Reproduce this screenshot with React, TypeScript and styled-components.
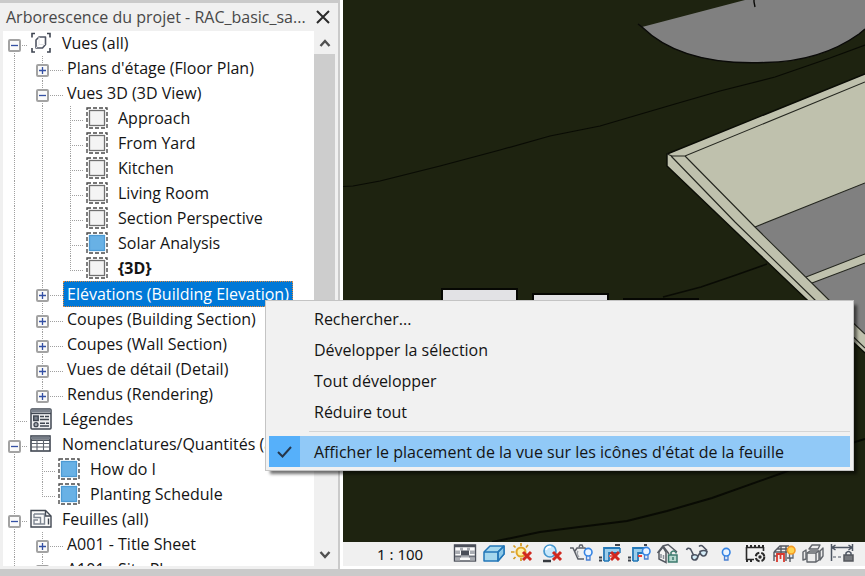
import React from "react";
import styled, { createGlobalStyle, css } from "styled-components";

const GlobalStyle = createGlobalStyle`
  * { box-sizing: border-box; }
  html, body, #root { height: 100%; }
  body {
    margin: 0;
    overflow: hidden;
    background: #cacaca;
    color: #141414;
    font-family: "Open Sans", "Noto Sans", sans-serif;
    font-size: 16px;
  }
  button { font: inherit; color: inherit; border: 0; padding: 0; background: none; }
  ul { list-style: none; margin: 0; padding: 0; }
`;

const Page = styled.div`
  display: flex;
  height: 100vh;
  padding-bottom: 7px;
  position: relative;
`;

const Browser = styled.aside`
  flex: 0 0 338px;
  display: flex;
  flex-direction: column;
  margin-top: 3px;
  padding: 0 3px 3px;
  background: #f0f0f0;
  min-height: 0;
`;

const TitleBar = styled.header`
  display: flex;
  align-items: center;
  justify-content: space-between;
  height: 28px;
  padding: 0 3px;
  color: #484848;
`;

const Title = styled.h1`
  margin: 0;
  font-size: 16px;
  font-weight: 400;
  line-height: 28px;
  white-space: nowrap;
`;

const CloseButton = styled.button`
  display: flex;
  padding: 2px;
`;

const BrowserBody = styled.div`
  flex: 1;
  display: flex;
  min-height: 0;
`;

const Tree = styled.ul`
  flex: 1;
  min-width: 0;
  overflow: hidden;
  background: #fff;
  padding-left: 11px !important;
`;

const TreeRow = styled.li<{ $selected?: boolean }>`
  display: flex;
  height: ${(p) => (p.$selected ? 26 : 25)}px;
  align-items: stretch;
`;

const dotsDown = "repeating-linear-gradient(to bottom, #a0a0a0 0 1px, transparent 1px 2px)";
const dotsAcross = "repeating-linear-gradient(to right, #a0a0a0 0 1px, transparent 1px 2px)";

type GuideKind = "line" | "tee" | "end" | "first";

const Guide = styled.span<{ $kind: GuideKind; $width: number }>`
  position: relative;
  flex: 0 0 ${(p) => p.$width}px;
  background-image: ${(p) => (p.$kind === "line" ? dotsDown : `${dotsDown}, ${dotsAcross}`)};
  background-repeat: no-repeat;
  background-size: 1px ${(p) => (p.$kind === "end" || p.$kind === "first" ? "14px" : "100%")},
    calc(100% - 3px) 1px;
  background-position: 0 ${(p) => (p.$kind === "first" ? "14px" : "0")}, 0 14px;
`;

const Expander = styled.button`
  position: absolute;
  left: -6px;
  top: 8px;
  width: 13px;
  height: 13px;
  border: 2px solid #a3a3a3;
  border-radius: 2px;
  background: #fafafa;
  display: flex;
  svg { display: block; }
`;

const NodeIcon = styled.span`
  flex: 0 0 32px;
  display: flex;
  align-items: flex-start;
  padding-top: 1px;
`;

const Label = styled.span<{ $bold?: boolean; $selected?: boolean }>`
  line-height: ${(p) => (p.$selected ? 26 : 25)}px;
  white-space: nowrap;
  font-weight: ${(p) => (p.$bold ? 700 : 400)};
  ${(p) =>
    p.$selected &&
    css`
      background: #0078d7;
      color: #fff;
      outline: 1px dotted #e58a3c;
      outline-offset: -1px;
      margin-left: -4px;
      padding: 0 4px;
    `}
`;

const ScrollBar = styled.div`
  flex: 0 0 21px;
  display: flex;
  flex-direction: column;
  background: #f0f0f0;
`;

const ScrollArrow = styled.button`
  flex: 0 0 23px;
  display: flex;
  align-items: center;
  justify-content: center;
`;

const ScrollTrack = styled.div`
  flex: 1;
`;

const ScrollThumb = styled.div`
  height: 70%;
  background: #cdcdcd;
`;

const ViewArea = styled.main`
  flex: 1;
  min-width: 0;
  display: flex;
  flex-direction: column;
  margin-left: 2px;
  border-left: 3px solid #fff;
  border-bottom: 3px solid #fff;
`;

const Scene = styled.svg`
  flex: 1;
  min-height: 0;
  width: 100%;
  display: block;
  background: #1e2310;
`;

const StatusBar = styled.footer`
  flex: 0 0 24px;
  display: flex;
  align-items: center;
  background: #f0f0f0;
`;

const Scale = styled.button`
  flex: 0 0 107px;
  padding-left: 34px;
  text-align: left;
  font-family: "Noto Sans", sans-serif;
  font-size: 15px;
  line-height: 22px;
  white-space: nowrap;
`;

const ToolButton = styled.button`
  flex: 0 0 29px;
  display: flex;
  justify-content: center;
  svg { display: block; }
`;

const Menu = styled.div`
  position: absolute;
  left: 265px;
  top: 300px;
  right: 11px;
  padding: 2px 3px 3px;
  border: 1px solid #c4c4c4;
  background: #f1f1f1;
  box-shadow: 4px 4px 3px -1px rgba(0, 0, 0, 0.55);
`;

const MenuItem = styled.button<{ $active?: boolean }>`
  display: flex;
  align-items: center;
  width: 100%;
  height: 31px;
  text-align: left;
  white-space: nowrap;
  background: ${(p) => (p.$active ? "#91c9f7" : "transparent")};
`;

const CheckCell = styled.span<{ $active?: boolean }>`
  flex: 0 0 31px;
  align-self: stretch;
  display: flex;
  align-items: center;
  justify-content: center;
  margin-right: 14px;
  background: ${(p) => (p.$active ? "#56b0fa" : "transparent")};
`;

const MenuSeparator = styled.hr`
  margin: 4px 0 4px 40px;
  border: 0;
  border-top: 1px solid #d5d5d5;
`;

/* ---------- tree icons ---------- */

const ViewsIcon = () => (
  <svg width="22" height="22" viewBox="0 0 22 22" fill="none" stroke="#3f4552" strokeWidth="1.6">
    <path d="M5 1.5H2v4M17 1.5h3v4M2 16v4h3M20 16v4h-3" />
    <path d="M6 8l3-3h6.500v7.500L12.500 16H6z" stroke="#505664" strokeLinejoin="round" />
    <path d="M9 5v7.500h6M9 12.500L6 16" stroke="#e4e5e8" strokeWidth="1" />
  </svg>
);

const SheetIcon = ({ filled }: { filled?: boolean }) => (
  <svg width="22" height="22" viewBox="0 0 22 22">
    <rect x="1" y="1" width="20" height="20" fill="#fff" stroke="#4a4a4a" strokeWidth="1.400" strokeDasharray="4 2" />
    <rect
      x="3.500" y="3.500" width="15" height="15"
      fill={filled ? "#68b1e5" : "#f4f4f4"}
      stroke={filled ? "#4c9ad3" : "#707070"} strokeWidth="1.300"
    />
  </svg>
);

const LegendIcon = () => (
  <svg width="22" height="22" viewBox="0 0 22 22" fill="none" stroke="#404752">
    <rect x="1" y="1" width="20" height="20" rx="1" fill="#eeeff1" strokeWidth="1.500" />
    <path d="M1 3h20" stroke="#7b828d" strokeWidth="3" />
    <path d="M1 5.500h20" strokeWidth="1.300" />
    <rect x="3.700" y="8" width="4.500" height="4.500" fill="#7b828d" strokeWidth="1.400" />
    <circle cx="6" cy="16.700" r="2" fill="#a5aab1" strokeWidth="1.300" />
    <path d="M10 8.500h4M15 8.500h4M10 11.500h9M10 15.200h5M16 15.200h3M10 18h9" strokeWidth="1.400" />
  </svg>
);

const ScheduleIcon = () => (
  <svg width="22" height="22" viewBox="0 0 22 22" fill="none" stroke="#404752">
    <rect x="1" y="3" width="19" height="15" fill="#fff" strokeWidth="1.600" />
    <path d="M1 5h19" stroke="#777e88" strokeWidth="2.500" />
    <path d="M1 7.200h19" strokeWidth="1.500" />
    <path d="M1 10.500h19M1 14h19M7 7v11M13.500 7v11" stroke="#5d636d" strokeWidth="1.100" />
  </svg>
);

const SheetsIcon = () => (
  <svg width="22" height="22" viewBox="0 0 22 22" fill="none" stroke="#404752" strokeWidth="1.400">
    <path d="M1 2.500h14.500L21 8v11H1z" fill="#fafafa" />
    <path d="M15.500 2.500v5.500H21M18.500 10.500v6" />
    <path d="M4 6h10.500v10h-4M4 6v3.500h6.500V16H4v-4h4" stroke="#7f8792" strokeWidth="1.400" />
  </svg>
);

type IconName = "views" | "empty" | "filled" | "legend" | "schedule" | "sheets";

const nodeIcons: Record<IconName, React.ReactElement> = {
  views: <ViewsIcon />,
  empty: <SheetIcon />,
  filled: <SheetIcon filled />,
  legend: <LegendIcon />,
  schedule: <ScheduleIcon />,
  sheets: <SheetsIcon />,
};

interface TreeNode {
  label: string;
  guides: GuideKind[];
  toggle?: "plus" | "minus";
  icon?: IconName;
  bold?: boolean;
  selected?: boolean;
}

const view = (label: string, extra: Partial<TreeNode> = {}): TreeNode => ({
  label,
  guides: ["line", "line", "tee"],
  icon: "empty",
  ...extra,
});

const category = (label: string, extra: Partial<TreeNode> = {}): TreeNode => ({
  label,
  guides: ["line", "tee"],
  toggle: "plus",
  ...extra,
});

const nodes: TreeNode[] = [
  { label: "Vues (all)", guides: ["first"], toggle: "minus", icon: "views" },
  category("Plans d'étage (Floor Plan)"),
  category("Vues 3D (3D View)", { toggle: "minus" }),
  view("Approach"),
  view("From Yard"),
  view("Kitchen"),
  view("Living Room"),
  view("Section Perspective"),
  view("Solar Analysis", { icon: "filled" }),
  view("{3D}", { bold: true, guides: ["line", "line", "end"] }),
  category("Elévations (Building Elevation)", { selected: true }),
  category("Coupes (Building Section)"),
  category("Coupes (Wall Section)"),
  category("Vues de détail (Detail)"),
  category("Rendus (Rendering)", { guides: ["line", "end"] }),
  { label: "Légendes", guides: ["tee"], icon: "legend" },
  { label: "Nomenclatures/Quantités (all)", guides: ["tee"], toggle: "minus", icon: "schedule" },
  { label: "How do I", guides: ["line", "tee"], icon: "filled" },
  { label: "Planting Schedule", guides: ["line", "end"], icon: "filled" },
  { label: "Feuilles (all)", guides: ["tee"], toggle: "minus", icon: "sheets" },
  category("A001 - Title Sheet"),
  category("A101 - Site Plan"),
];

const TreeItem = ({ node }: { node: TreeNode }) => {
  const last = node.guides.length - 1;
  return (
    <TreeRow $selected={node.selected}>
      {node.guides.map((kind, i) => {
        const width = i < last ? 28 : node.icon ? 16 : 25;
        return (
          <Guide key={i} $kind={kind} $width={width}>
            {i === last && node.toggle && (
              <Expander aria-label={`${node.toggle === "plus" ? "Développer" : "Réduire"} ${node.label}`}>
                <svg width="9" height="9" viewBox="0 0 9 9" stroke="#3450a4" strokeWidth="1.300">
                  <path d={node.toggle === "plus" ? "M1 4.500h7M4.500 1v7" : "M1 4.500h7"} />
                </svg>
              </Expander>
            )}
          </Guide>
        );
      })}
      {node.icon && <NodeIcon>{nodeIcons[node.icon]}</NodeIcon>}
      <Label $bold={node.bold} $selected={node.selected}>{node.label}</Label>
    </TreeRow>
  );
};

/* ---------- view control bar icons ---------- */

const RedCross = ({ x, y }: { x: number; y: number }) => (
  <path d={`M${x} ${y}l8 8M${x + 8} ${y}l-8 8`} stroke="#d0281f" strokeWidth="3" fill="none" />
);

const Bulb = ({ x, y, lit }: { x: number; y: number; lit?: boolean }) => (
  <g transform={`translate(${x} ${y})`} strokeWidth="1.600">
    <path d="M2.500 8v4h3.500V8" fill="#dfe8f5" stroke={lit ? "#5c6470" : "#4a7fd0"} strokeWidth="1.300" />
    <circle cx="4.200" cy="4.200" r="3.800" fill={lit ? "#ffd34f" : "#eaf4ff"} stroke={lit ? "#f59a23" : "#3584e4"} />
  </g>
);

const viewTools: { name: string; art: React.ReactElement }[] = [
  {
    name: "Niveau de détail",
    art: (
      <g>
        <rect x="1.500" y="2" width="21" height="16" fill="#fbfbfb" stroke="#4b4f59" strokeWidth="1.400" />
        <path d="M1 3h22" stroke="#4b4f59" strokeWidth="2.500" />
        <path d="M2 7.500h5v3.500H2zM17 7.500h5v3.500h-5zM2 14.500h5v3H2zM17 14.500h5v3h-5z" fill="#a9acb2" />
        <path d="M7 4.500h3v3H7zM14 4.500h3v3h-3zM7 12.500h10v2H7z" fill="#a9acb2" />
        <path d="M8 7.500h8v5H8z" fill="#4b4f59" />
        <path d="M2 12.500h6v2H2zM16 12.500h6v2h-6z" fill="#70747d" />
      </g>
    ),
  },
  {
    name: "Style visuel",
    art: (
      <g stroke="#2377b8" strokeWidth="1.500" strokeLinejoin="round">
        <path d="M2 9l6-6h14v8l-6 7H2z" fill="#a5d7ee" />
        <path d="M16 9l6-6v8l-6 7z" fill="#8cc8e8" />
        <path d="M2 9h14l6-6M16 9v9" fill="none" />
      </g>
    ),
  },
  {
    name: "Trajectoire du soleil",
    art: (
      <g transform="translate(-1 0)">
        <circle cx="11" cy="9" r="4.500" fill="#fff0a8" stroke="#e0a526" strokeWidth="2" />
        <path d="M11 0v3M3.500 2.500l2 2M18 2l-2 2.500M1 9h3.500M3.500 16l2-2M11 15v3" stroke="#d49a22" strokeWidth="1.700" />
        <RedCross x={13} y={9} />
      </g>
    ),
  },
  {
    name: "Ombres",
    art: (
      <g transform="translate(1 0)">
        <path d="M2 18h8" stroke="#36393f" strokeWidth="2.500" />
        <circle cx="9" cy="8" r="6" fill="#c8e8fb" stroke="#4597ce" strokeWidth="1.700" />
        <path d="M5 7q1-4 5-3" stroke="#fff" strokeWidth="2" fill="none" />
        <RedCross x={12} y={9} />
      </g>
    ),
  },
  {
    name: "Rendu",
    art: (
      <g fill="none" stroke="#5a5e66" strokeWidth="1.500">
        <path d="M1 5h3l5 11h6M6 8l2-3h8l2 2M10 4l1-2h2l1 2" />
        <path d="M9 8q-2 3 1 6" stroke="#a0a4aa" />
        <Bulb x={15} y={5} />
      </g>
    ),
  },
  {
    name: "Cadrer la vue",
    art: (
      <g fill="none">
        <path d="M6 18V5h16M11 18v-8h10" stroke="#2478b7" strokeWidth="1.800" />
        <path d="M8.500 18V7.500H22" stroke="#9acdec" strokeWidth="2.800" />
        <path d="M6 18h5M22 5v5" stroke="#2478b7" strokeWidth="1.500" />
        <path d="M1 14.500h3M1 17.500h3M17 2h5" stroke="#40444c" strokeWidth="1.800" />
        <path d="M11 13h4" stroke="#ed6f65" strokeWidth="2" />
        <RedCross x={13} y={9} />
      </g>
    ),
  },
  {
    name: "Afficher la zone cadrée",
    art: (
      <g fill="none">
        <path d="M6 18V5h11M11 18v-8h6" stroke="#2478b7" strokeWidth="1.800" />
        <path d="M8.500 18V7.500H16" stroke="#9acdec" strokeWidth="2.800" />
        <path d="M6 18h5" stroke="#2478b7" strokeWidth="1.500" />
        <path d="M1 14.500h3M1 17.500h3M17 2h3" stroke="#40444c" strokeWidth="1.800" />
        <path d="M11 13h4" stroke="#ed3e35" strokeWidth="2" />
        <Bulb x={15} y={4} />
      </g>
    ),
  },
  {
    name: "Vue 3D verrouillée",
    art: (
      <g fill="none" stroke="#555a62" strokeWidth="1.500">
        <path d="M3 9v7l7 3.500V9l-3-5z" fill="#f5f5f5" />
        <path d="M1.500 10L7 3l5-1.500 9 7.500M7 3l6 8" />
        <path d="M5 11v4M7.500 12v4" stroke="#8b9098" />
        <rect x="12.500" y="12" width="8.500" height="7" fill="#b7d8cf" stroke="#3b7a6d" />
        <path d="M15 12V9.500q2.500-3 5 0v1M17 14v3" stroke="#3b7a6d" />
      </g>
    ),
  },
  {
    name: "Masquage temporaire",
    art: (
      <g fill="none" stroke="#4b5260" strokeWidth="1.600">
        <path d="M1.500 7q1-3 4-1l3 6M14 3.500q2-2 4 0l4 4M13 13l2-3" />
        <path d="M7 12.500q4-2 6 1-1 4-4 3.500-3-1-2-4.500zM15 8.500q4-2 7 0-1 5-4 4.500-3-1-3-4.500z" fill="#d5edf8" />
      </g>
    ),
  },
  { name: "Afficher les éléments cachés", art: <Bulb x={8} y={5} /> },
  {
    name: "Propriétés temporaires",
    art: (
      <g fill="none" stroke="#292929">
        <path d="M3.500 4v13M20.500 4v4M3 4.500h18M3 16.500h8" strokeWidth="1.600" />
        <path d="M3 3h18M3 18h8" strokeWidth="2" strokeDasharray="2 2" />
        <circle cx="17" cy="14" r="4.300" strokeWidth="2" strokeDasharray="5 2" />
        <circle cx="17" cy="14" r="1.700" fill="#292929" stroke="none" />
      </g>
    ),
  },
  {
    name: "Modèle analytique",
    art: (
      <g fill="none" stroke="#555a62" strokeWidth="1.400">
        <path d="M2 9l6-6h9M2 9h13M2 9v9M5 6h10M9 3v7M14 3v15M2 13h3M18 14v5M15 15h4" />
        <path d="M5 19v-8h7v8M8.500 11v5" stroke="#d9392e" strokeWidth="1.800" />
        <Bulb x={15} y={3} lit />
      </g>
    ),
  },
  {
    name: "Jeux de déplacement",
    art: (
      <g fill="#ececec" stroke="#60646a" strokeWidth="1.400" strokeLinejoin="round">
        <path d="M8 6l3-4h8l-2 4zM2 9l3-2v9l-3 1zM19 8l3-3v8l-3 4z" />
        <path d="M6 10l3-2h9v9l-3 2H6z" />
        <path d="M6 10h9v9M15 10l3-2" fill="none" />
      </g>
    ),
  },
  {
    name: "Contraintes",
    art: (
      <g fill="none" stroke="#4d5562" strokeWidth="1.500">
        <path d="M1.500 1v17M22.500 1v7M2 4.500h20M5.500 2L2 4.500 5.500 7M18.500 2L22 4.500 18.500 7" />
        <path d="M3 14h9" strokeDasharray="3 2" strokeWidth="1.200" />
        <rect x="14" y="12" width="9" height="6" fill="#777a7e" stroke="#54575c" />
        <path d="M16 12v-2q2.500-3 5 0v2" />
      </g>
    ),
  },
];

const ModelScene = () => (
  <Scene viewBox="343 0 522 542" preserveAspectRatio="xMinYMin slice" role="img" aria-label="Vue 3D du modèle">
    <g fill="none" stroke="#090b04" strokeWidth="1.200">
      <path d="M343 186.500l10-.5 27-5 60-15 60-16 50-14 50-10 75-22 45-13 55-14 55-19 35-13" />
      <path d="M663 297l38-10 35-12 31-11" strokeWidth="1.600" />
      <path d="M492 542l48-10 47-6 40-5 40-10 45-13 73-26 70-30 10-3" strokeWidth="2" />
    </g>
    <path d="M642 27L745 0h120v29l-6 5c-28 20-60 28-94 28.500-48 2-94-7-123-35.500z" fill="#808080" />
    <path d="M638 24l4 3c29 28.500 75 37.500 123 35.500 34-.5 66-8.500 94-28.500l6-5M754 0v2l1 5" fill="none" stroke="#0a0a08" strokeWidth="1.400" />
    <path d="M667 154l5-2 193-78v279l-60-55L667 166z" fill="#bfc1ad" />
    <path d="M865 74l-193 78-5 2v12l138 132 60 55" fill="none" stroke="#0b0d06" strokeWidth="1.400" />
    <g fill="#808080">
      <path d="M755 227l110-44v71l-59 23z" />
      <path d="M812 283l53-20v71z" />
    </g>
    <g fill="none" stroke="#24261f" strokeWidth="1.100">
      <path d="M755 227l110-44M806 277l59-23M812 283l53-20" />
      <path d="M667 154l5 2h13L865 82M685 156l70 71 74 73 36 34M671 156l64 66 80 78 50 48" />
    </g>
    <path d="M442 303v-14h75v14M533 303v-9h75v9" fill="#e2e2e5" stroke="#060703" strokeWidth="2" />
    <path d="M623 299h76" stroke="#060703" strokeWidth="2" />
  </Scene>
);

const menuEntries = ["Rechercher...", "Développer la sélection", "Tout développer", "Réduire tout"];

export default function App() {
  return (
    <>
      <GlobalStyle />
      <Page>
        <Browser>
          <TitleBar>
            <Title>Arborescence du projet - RAC_basic_sa...</Title>
            <CloseButton aria-label="Fermer">
              <svg width="14" height="14" viewBox="0 0 14 14" stroke="#2b2b2b" strokeWidth="2">
                <path d="M1 1l12 12M13 1L1 13" />
              </svg>
            </CloseButton>
          </TitleBar>
          <BrowserBody>
            <Tree>
              {nodes.map((node) => (
                <TreeItem key={node.label} node={node} />
              ))}
            </Tree>
            <ScrollBar>
              <ScrollArrow aria-label="Défiler vers le haut">
                <svg width="12" height="8" viewBox="0 0 12 8" fill="none" stroke="#505050" strokeWidth="2.400">
                  <path d="M1.500 7L6 2l4.500 5" />
                </svg>
              </ScrollArrow>
              <ScrollTrack>
                <ScrollThumb />
              </ScrollTrack>
              <ScrollArrow aria-label="Défiler vers le bas">
                <svg width="12" height="8" viewBox="0 0 12 8" fill="none" stroke="#505050" strokeWidth="2.400">
                  <path d="M1.500 1L6 6l4.500-5" />
                </svg>
              </ScrollArrow>
            </ScrollBar>
          </BrowserBody>
        </Browser>
        <ViewArea>
          <ModelScene />
          <StatusBar>
            <Scale>1 : 100</Scale>
            {viewTools.map((tool) => (
              <ToolButton key={tool.name} aria-label={tool.name}>
                <svg width="24" height="22" viewBox="0 0 24 22">{tool.art}</svg>
              </ToolButton>
            ))}
          </StatusBar>
        </ViewArea>
        <Menu role="menu">
          {menuEntries.map((entry) => (
            <MenuItem key={entry} role="menuitem">
              <CheckCell />
              {entry}
            </MenuItem>
          ))}
          <MenuSeparator />
          <MenuItem $active role="menuitemcheckbox" aria-checked="true">
            <CheckCell $active>
              <svg width="15" height="12" viewBox="0 0 15 12" fill="none" stroke="#26364a" strokeWidth="2">
                <path d="M1 6l4.500 4.500L14 1" />
              </svg>
            </CheckCell>
            Afficher le placement de la vue sur les icônes d'état de la feuille
          </MenuItem>
        </Menu>
      </Page>
    </>
  );
}
